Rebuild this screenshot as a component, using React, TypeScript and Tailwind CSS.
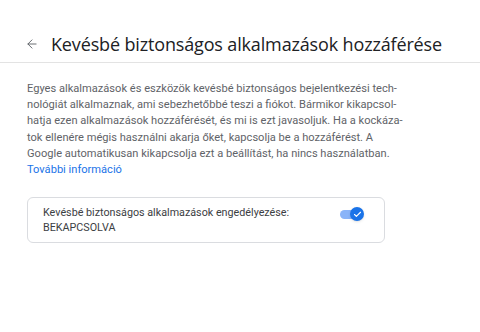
import React from 'react';
import { ArrowLeft, Check } from 'lucide-react';

const lines = [
  'Egyes alkalmazások és eszközök kevésbé biztonságos bejelentkezési tech-',
  'nológiát alkalmaznak, ami sebezhetőbbé teszi a fiókot. Bármikor kikapcsol-',
  'hatja ezen alkalmazások hozzáférését, és mi is ezt javasoljuk. Ha a kockáza-',
  'tok ellenére mégis használni akarja őket, kapcsolja be a hozzáférést. A',
  'Google automatikusan kikapcsolja ezt a beállítást, ha nincs használatban.',
];

const App: React.FC = () => {
  return (
    <div className="w-[480px] h-[332px] bg-white font-['Roboto',sans-serif] overflow-hidden">
      {/* Header */}
      <header className="h-[63px] pt-[28px] border-b border-[#e3e3e3] flex items-start">
        <div className="flex items-center pl-[25px] h-[32px]">
          <ArrowLeft size={14} strokeWidth={1.6} className="text-[#5f6368]" />
          <h1 className="ml-[12px] text-[18px] text-[#202124] font-['Open_Sans',sans-serif] tracking-[-0.15px]">
            Kevésbé biztonságos alkalmazások hozzáférése
          </h1>
        </div>
      </header>

      {/* Description */}
      <div className="px-[27px] pt-[18px] text-[11.1px] leading-[16.2px] text-[#5f6368]">
        {lines.map((l) => (
          <p key={l} className="whitespace-nowrap">{l}</p>
        ))}
        <a className="text-[#1a73e8]">További információ</a>
      </div>

      {/* Setting card */}
      <div className="mx-[27px] mt-[19px] w-[358px] h-[46px] border border-[#dadce0] rounded-[6px] flex items-start justify-between pl-[15px] pr-[20px] pt-[7px]">
        <div className="text-[10.75px] leading-[15px] text-[#3c4043]">
          <p>Kevésbé biztonságos alkalmazások engedélyezése:</p>
          <p>BEKAPCSOLVA</p>
        </div>
        <div className="relative mt-[2px] w-[24px] h-[14px] flex items-center">
          <div className="w-[22px] h-[9px] rounded-full bg-[#8ab4f8]" />
          <div className="absolute right-0 w-[14px] h-[14px] rounded-full bg-[#1a73e8] flex items-center justify-center shadow-sm">
            <Check size={9} strokeWidth={3} className="text-white" />
          </div>
        </div>
      </div>
    </div>
  );
};

export default App;
